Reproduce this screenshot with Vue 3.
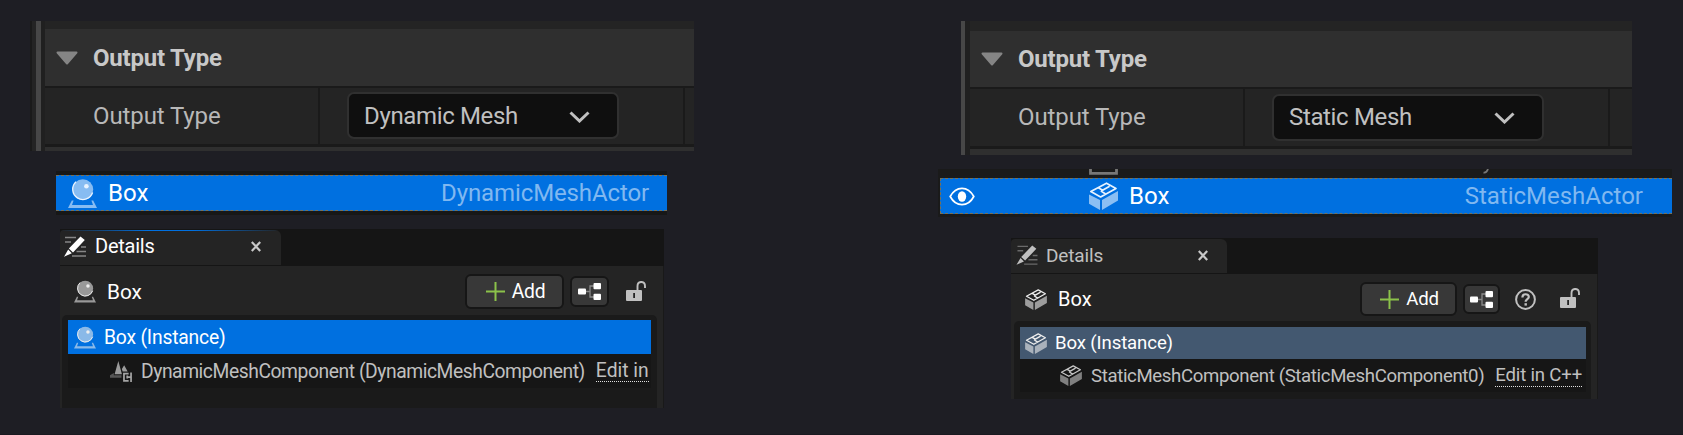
<script setup>
const columns = [
  {
    key: 'dynamic',
    option: 'Dynamic Mesh',
    actor: 'DynamicMeshActor',
    icon: 'i-sphere',
    componentIcon: 'i-shapes',
    component: 'DynamicMeshComponent (DynamicMeshComponent)',
    edit: 'Edit in',
    outliner: false,
    help: false,
  },
  {
    key: 'static',
    option: 'Static Mesh',
    actor: 'StaticMeshActor',
    icon: 'i-cube',
    componentIcon: 'i-cube',
    component: 'StaticMeshComponent (StaticMeshComponent0)',
    edit: 'Edit in C++',
    outliner: true,
    help: true,
  },
]
</script>

<template>
  <main class="page">
    <svg class="defs" aria-hidden="true">
      <symbol id="i-sphere" viewBox="0 0 29 29">
        <path d="M3.8 21.5 L0 29 H29 L25.2 21.5 H23.4 L25 26 H4 L5.6 21.5 Z" fill="currentColor" opacity=".58" />
        <circle cx="14.8" cy="10.6" r="10.4" fill="currentColor" opacity=".58" />
        <path d="M8 2.8 A10.2 10.2 0 1 0 24.6 13.5" fill="none" stroke="currentColor" stroke-width="1.3" />
        <circle cx="18.4" cy="7.2" r="2.3" fill="currentColor" />
      </symbol>
      <symbol id="i-cube" viewBox="0 0 29 28">
        <path d="M1.8 9.6 L17.5 1.2 L27 6.4 L11.6 15 Z M9.4 5.8 L13.6 8.2 L12.4 9.4 L16.2 11.8 M13.6 8.2 L20.6 4.2" fill="none" stroke="currentColor" stroke-width="1.7" stroke-linejoin="round" />
        <path d="M0 12.4 L11 18 V28 L0 21.8 Z M13 18 L29 9 V18.5 L13 28 Z" fill="currentColor" opacity=".6" />
      </symbol>
      <symbol id="i-shapes" viewBox="0 0 23 22">
        <path d="M8.7 0 L12.5 14 H4.8 Z M14.8 4.5 L18.5 11 H13.2 L12.4 8.5 Z" fill="currentColor" opacity=".75" />
        <path d="M4 12.5 L0 15 V17.6 H12 V15 H4 Z" fill="currentColor" opacity=".36" />
        <path d="M19.5 13.2 H14.6 V20.8 H19.5 M18 15.2 V18.2 M18 16.8 H21.5 M22 12 V22" fill="none" stroke="currentColor" stroke-opacity=".8" stroke-width="1.8" />
      </symbol>
      <symbol id="i-pencil" viewBox="0 0 22 21">
        <path d="M1 1.5 H12 M1 6 H7 M17 11 H22 M12.5 15.5 H22 M8 20 H22" stroke="currentColor" stroke-opacity=".45" stroke-width="1.4" />
        <path d="M16.5 0.4 L20.8 4 L9 16.4 L4.9 12.6 Z M4.2 13.6 L7.8 17.2 L0 20.8 Z" fill="currentColor" />
      </symbol>
    </svg>

    <section v-for="c in columns" :key="c.key" class="column" :class="c.key">
      <div class="output">
        <div class="rail"></div>
        <div class="rows">
          <div class="category">
            <svg class="arrow" viewBox="0 0 22 14"><path d="M1.5 1.5 H20.5 L11 12.5 Z" fill="#858585" stroke="#858585" stroke-width="2" stroke-linejoin="round" /></svg>
            <b>Output Type</b>
          </div>
          <div class="property">
            <div class="name">Output Type</div>
            <div class="value">
              <div class="combo">
                <span>{{ c.option }}</span>
                <svg viewBox="0 0 21 12"><path d="M1.5 1.5 L10.5 10 L19.5 1.5" fill="none" stroke="#c0c0c0" stroke-width="3" /></svg>
              </div>
            </div>
            <div class="reset"></div>
          </div>
          <div class="next"></div>
        </div>
      </div>

      <div class="outliner">
        <div v-if="c.outliner" class="previous">
          <svg class="cut" viewBox="0 0 29 6"><path d="M1.5 0 V4.3 H27.5 V0" fill="none" stroke="#777" stroke-width="2.8" /></svg>
          <svg class="tail" viewBox="0 0 6 5"><path d="M5 0 C4 3 3 4 0.5 3.6" fill="none" stroke="#777" stroke-width="1.8" /></svg>
        </div>
        <div class="selected">
          <svg v-if="c.outliner" class="eye" viewBox="0 0 26 19">
            <path d="M1.2 9.5 C7 -1.4 19 -1.4 24.8 9.5 C19 20.4 7 20.4 1.2 9.5 Z" fill="none" stroke="#fff" stroke-width="1.7" />
            <ellipse cx="13" cy="9.5" rx="4.2" ry="5.2" fill="#fff" />
          </svg>
          <svg class="actor-icon"><use :href="'#' + c.icon" /></svg>
          <span class="label">Box</span>
          <span class="type">{{ c.actor }}</span>
        </div>
      </div>

      <div class="details">
        <div class="tabs">
          <div class="tab">
            <svg class="pencil"><use href="#i-pencil" /></svg>
            <span>Details</span>
            <svg class="close" viewBox="0 0 10 11"><path d="M.8 1 L9.2 10 M9.2 1 L.8 10" stroke="#c8c8c8" stroke-width="2.2" /></svg>
          </div>
        </div>
        <div class="body">
          <div class="toolbar">
            <svg class="icon"><use :href="'#' + c.icon" /></svg>
            <span class="object">Box</span>
            <div class="button add">
              <svg viewBox="0 0 19 19"><path d="M9.5 0 V19 M0 9.5 H19" stroke="#8bc24a" stroke-width="2" /></svg>
              <span>Add</span>
            </div>
            <div class="button graph">
              <svg viewBox="0 0 23 17">
                <path d="M7 8.5 H12 M17 3 H12 V14 H17" fill="none" stroke="#8a8a8a" stroke-width="1.3" />
                <rect x="0" y="5.5" width="8" height="6" rx="1" fill="#fff" />
                <rect x="15.5" y="0" width="7.5" height="6.2" rx="1" fill="#fff" />
                <rect x="15.5" y="10.8" width="7.5" height="6.2" rx="1" fill="#fff" />
              </svg>
            </div>
            <svg v-if="c.help" class="help" viewBox="0 0 21 21">
              <circle cx="10.5" cy="10.5" r="9.4" fill="none" stroke="#c0c0c0" stroke-width="2" />
              <path d="M7.4 8.4 C7.4 4.2 13.8 4.3 13.8 8 C13.8 10.2 10.6 10.2 10.6 12.8" fill="none" stroke="#c0c0c0" stroke-width="2.2" />
              <rect x="9.5" y="14.2" width="2.4" height="2.4" fill="#c0c0c0" />
            </svg>
            <svg class="lock" viewBox="0 0 20 20">
              <path d="M11.5 9 V5.2 C11.5 -.5 19 -.5 19 5.2 V7" fill="none" stroke="#c0c0c0" stroke-width="1.9" />
              <path fill-rule="evenodd" d="M1 9 H15 Q16 9 16 10 V19 Q16 20 15 20 H1 Q0 20 0 19 V10 Q0 9 1 9 Z M7.2 12 V17 H9 V12 Z" fill="#c0c0c0" />
            </svg>
          </div>
          <div class="tree">
            <div class="item root">
              <svg class="icon"><use :href="'#' + c.icon" /></svg>
              <span>Box (Instance)</span>
            </div>
            <div class="item child">
              <svg class="icon"><use :href="'#' + c.componentIcon" /></svg>
              <span class="component">{{ c.component }}</span>
              <span class="edit">{{ c.edit }}</span>
            </div>
          </div>
        </div>
      </div>
    </section>
  </main>
</template>

<style>
body { background: #1e1e24; }
</style>

<style scoped>
* { box-sizing: border-box; }
svg { display: block; flex: none; }
.defs { position: absolute; width: 0; height: 0; }
.page {
  display: flex;
  height: 435px;
  overflow: hidden;
  background: #1e1e24;
  border-bottom: 1px solid #1a1920;
  font-family: Roboto, "Liberation Sans", sans-serif;
  white-space: nowrap;
  color: #fff;
}
.column { padding-top: 21px; }
.dynamic { width: 938px; padding-left: 30px; }
.static { width: 745px; }

/* Output type */
.output { display: flex; background: #242424; font-size: 24px; color: #b8b8b8; }
.dynamic .output { width: 664px; height: 130px; }
.static .output { width: 671px; height: 134px; margin-left: 23px; }
.rail { flex: none; background: #474747; }
.dynamic .rail { width: 15px; border-left: 2px solid #1a1a1a; background: linear-gradient(90deg, #242424 4px, #474747 4px 9px, #202020 9px); }
.static .rail { width: 9px; background: linear-gradient(90deg, #474747 4px, #202020 4px); }
.rows { flex: 1; display: flex; flex-direction: column; }
.dynamic .rows { padding-top: 8px; }
.static .rows { padding-top: 10px; }
.category { display: flex; align-items: center; background: #2f2f2f; padding-left: 11px; color: #c8c8c8; }
.dynamic .category { height: 57px; }
.static .category { height: 56px; }
.arrow { width: 22px; height: 14px; margin-right: 15px; }
.category b { letter-spacing: -.2px; }
.property { display: flex; border-top: 2px solid #1a1a1a; border-bottom: 3px solid #1a1a1a; }
.dynamic .property { height: 61px; }
.static .property { height: 62px; }
.name { display: flex; align-items: center; width: 275px; padding: 0 0 1px 48px; border-right: 2px solid #1a1a1a; letter-spacing: -.1px; }
.value { display: flex; align-items: center; width: 365px; padding: 0 0 1px 27px; border-right: 2px solid #1a1a1a; }
.combo {
  display: flex; align-items: center; justify-content: space-between;
  width: 272px; height: 47px; padding: 0 27px 0 15px;
  border: 2px solid #303030; border-radius: 7px; background: #0f0f0f;
  color: #c0c0c0; letter-spacing: -.35px;
}
.combo svg { width: 21px; height: 12px; margin-top: 2px; }
.next { flex: 1; background: #2f2f2f; }

/* Outliner row */
.outliner { background: #171717; font-size: 24px; }
.dynamic .outliner { width: 611px; height: 44px; margin: 20px 0 0 26px; padding-top: 4px; }
.static .outliner { width: 734px; height: 48px; margin-top: 14px; padding-left: 2px; background: #1a1a1a; }
.previous { display: flex; height: 9px; padding-left: 149px; }
.cut { width: 29px; height: 6px; }
.tail { width: 6px; height: 5px; margin-left: 365px; }
.selected {
  display: flex; align-items: center; height: 36px;
  border-top: 1px dashed #777058; border-bottom: 1px dashed #777058; background: #0070e0;
}
.static .selected { border-left: 1px dashed #777058; }
.dynamic .selected { padding-left: 12px; padding-right: 18px; }
.static .selected { padding-left: 8px; padding-right: 29px; }
.actor-icon { width: 29px; height: 29px; color: #e8f3ff; }
.static .actor-icon { height: 28px; margin-left: 114px; }
.eye { width: 26px; height: 19px; }
.label { margin-left: 11px; }
.type { margin-left: auto; color: #80b8f0; }
.dynamic .type { letter-spacing: -.12px; }

/* Details */
.details { background: #151515; }
.dynamic .details { width: 604px; height: 179px; margin: 14px 0 0 30px; font-size: 19.3px; }
.static .details { width: 587px; height: 161px; margin: 21px 0 0 73px; font-size: 18.6px; }
.tabs { padding-top: 1px; }
.tab { display: flex; align-items: center; background: #242424; border-radius: 4px 6px 0 0; }
.dynamic .tab {
  width: 221px; height: 35px; padding: 0 20px 3px 4px; font-size: 20px; letter-spacing: -.25px;
  background: linear-gradient(90deg, transparent, #0070e0 40% 60%, transparent) top / 100% 1px no-repeat, #242424;
}
.static .tab { width: 216px; height: 34px; padding: 0 19px 2px 5px; font-size: 19px; letter-spacing: -.15px; color: #c0c0c0; }
.pencil { width: 22px; height: 21px; margin-right: 9px; }
.static .pencil { height: 20px; margin-right: 8px; }
.close { width: 10px; height: 11px; margin-left: auto; }
.body { margin-top: 1px; background: #242424; border-right: 1px solid #191919; display: flex; flex-direction: column; }
.dynamic .body { height: 142px; }
.static .body { height: 125px; }
.toolbar { display: flex; align-items: center; }
.dynamic .toolbar { height: 49px; padding: 2px 17px 0 14px; }
.static .toolbar { height: 47px; padding: 3px 17px 0 14px; }
.icon { width: 22px; height: 23px; color: #eee; }
.static .icon { height: 21px; }
.object { margin-left: 11px; }
.dynamic .object { font-size: 20.8px; }
.static .object { font-size: 20px; }
.button { display: flex; align-items: center; justify-content: center; border: 2px solid #161616; border-radius: 6px; background: #383838; }
.add { margin-left: auto; gap: 7px; letter-spacing: -.2px; padding-left: 2px; }
.add svg { width: 19px; height: 19px; }
.dynamic .add { width: 99px; height: 35px; }
.static .add { width: 97px; height: 34px; }
.graph { margin-left: 6px; }
.graph svg { width: 23px; height: 17px; }
.dynamic .graph { width: 39px; height: 31px; }
.static .graph { width: 37px; height: 30px; }
.help { width: 21px; height: 21px; margin-left: 15px; }
.lock { width: 20px; height: 20px; margin-top: -2px; }
.dynamic .lock { margin-left: 17px; }
.static .lock { margin-left: 24px; }
.tree { flex: 1; background: #1a1a1a; border-radius: 5px 5px 0 0; }
.dynamic .tree { margin: 0 6px 0 2px; padding: 5px 6px 0; }
.static .tree { margin: 0 6px 0 3px; padding: 6px 5px 0 6px; }
.item { display: flex; align-items: center; }
.dynamic .item { height: 34px; }
.static .item { height: 33px; }
.root { padding-left: 6px; }
.dynamic .root { background: #0070e0; letter-spacing: -.18px; }
.static .root { height: 32px; padding-left: 5px; background: #435870; letter-spacing: -.12px; }
.root span { margin-left: 8px; }
.child { background: #161616; color: #c0c0c0; }
.dynamic .child { padding-left: 42px; }
.static .child { padding-left: 40px; }
.child .icon { color: #c8c8c8; }
.component { margin-left: 9px; }
.dynamic .component { letter-spacing: -.44px; }
.static .component { letter-spacing: -.35px; }
.edit { margin-left: 11px; border-bottom: 1px dotted #e0e0e0; line-height: 21px; }
.static .edit { letter-spacing: -.18px; }
</style>
